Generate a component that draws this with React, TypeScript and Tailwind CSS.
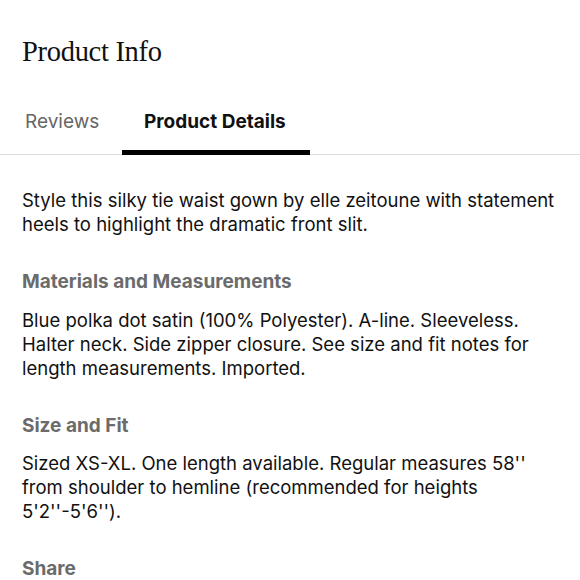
export default function App() {
  return (
    <div className="h-[580px] w-[580px] overflow-hidden bg-white text-[#111]">
      <h1 className="px-[22px] pt-[35px] font-['Liberation_Serif',serif] text-[28.5px] leading-[34px] tracking-[-0.3px]">
        Product Info
      </h1>
      <div className="mt-[41px] flex border-b border-[#dcdcdc] font-['Inter',sans-serif] text-[19px]">
        <div className="w-[122px] pl-[25px] pb-[20px] leading-[24px] text-[#666]">Reviews</div>
        <div className="relative w-[188px] pl-[22px] pb-[20px] leading-[24px] font-bold">
          Product Details
          <span className="absolute -bottom-px left-0 h-[5px] w-full bg-black" />
        </div>
      </div>
      <div className="px-[22px] pt-[33px] font-['Inter',sans-serif] text-[18.5px] leading-[24px]">
        <p>Style this silky tie waist gown by elle zeitoune with statement heels to highlight the dramatic front slit.</p>
        <h2 className="mt-[34px] text-[19px] font-bold text-[#6b6b6b]">Materials and Measurements</h2>
        <p className="mt-[14px]">
          Blue polka dot satin (100% Polyester). A-line. Sleeveless. Halter neck. Side zipper closure. See size and fit notes for length measurements. Imported.
        </p>
        <h2 className="mt-[34px] text-[19px] font-bold text-[#6b6b6b]">Size and Fit</h2>
        <p className="mt-[13px]">
          Sized XS-XL. One length available. Regular measures 58'' from shoulder to hemline (recommended for heights 5'2''-5'6'').
        </p>
        <h2 className="mt-[34px] text-[19px] font-bold text-[#6b6b6b]">Share</h2>
      </div>
    </div>
  );
}
